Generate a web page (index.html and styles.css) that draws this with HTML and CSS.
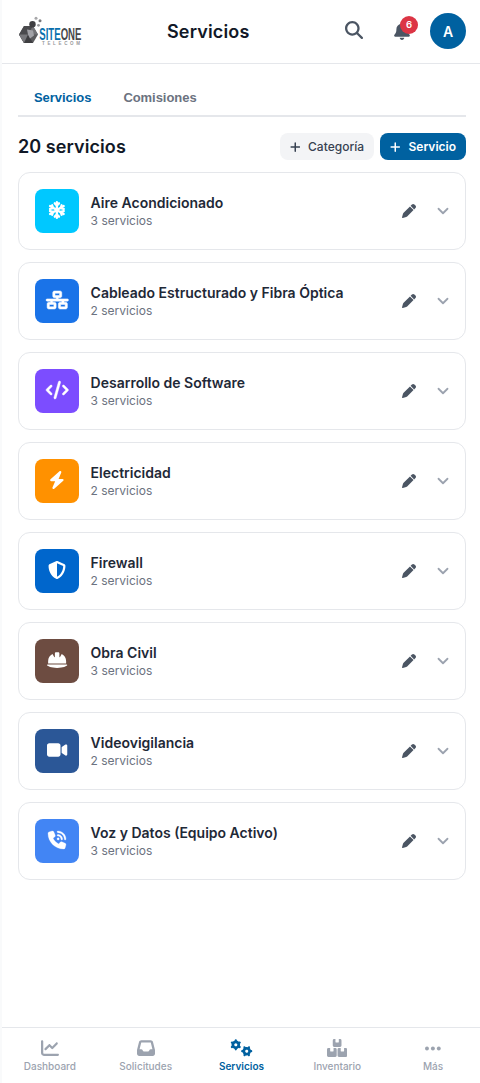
FILE: index.html
```
<!DOCTYPE html>
<html lang="es">
<head>
<meta charset="utf-8">
<title>Servicios</title>
<link rel="stylesheet" href="styles.css">
</head>
<body>
<svg class="sprite" xmlns="http://www.w3.org/2000/svg">
  <symbol id="plus" viewBox="0 0 448 512"><path d="M256 80c0-17.700-14.300-32-32-32s-32 14.300-32 32V224H48c-17.700 0-32 14.300-32 32s14.300 32 32 32H192V432c0 17.700 14.300 32 32 32s32-14.300 32-32V288H400c17.700 0 32-14.300 32-32s-14.300-32-32-32H256V80z"/></symbol>
  <symbol id="pen" viewBox="0 0 512 512"><path d="M362.700 19.300L314.300 67.700 444.300 197.700l48.400-48.400c25-25 25-65.500 0-90.500L453.300 19.300c-25-25-65.500-25-90.500 0zm-71 71L58.600 323.500c-10.400 10.400-18 23.300-22.200 37.400L1 481.200C-1.500 489.700 .8 498.800 7 505s15.300 8.500 23.700 6.100l120.300-35.400c14.100-4.200 27-11.800 37.400-22.200L421.700 220.300 291.700 90.300z"/></symbol>
  <symbol id="chevron" viewBox="0 0 512 512"><path d="M64 160l192 192 192-192" fill="none" stroke="currentColor" stroke-width="76" stroke-linecap="round" stroke-linejoin="round"/></symbol>
</svg>
<div class="app">
  <header class="topbar">
    <svg class="logo" viewBox="0 0 66 32" role="img" aria-label="SiteOne Telecom">
      <path d="M5 11h9l5 8.500-5 8.500H5L0 19.500z" fill="#5b5b5e"/>
      <path d="M5 11h9l-5 8.500H0z" fill="#4a4a4d"/><path d="M14 11l5 8.500H9z" fill="#737377"/><path d="M0 19.500h9L14 28H5z" fill="#3e3e41"/><path d="M0 19.500h9L5 28z" fill="#77777b"/><path d="M9 19.500l-1-5 6 1 1 5-4 3z" fill="#a2a2a7"/>
      <circle cx="13.500" cy="9.300" r="3.200" fill="#3f3f42"/><circle cx="17" cy="3.200" r="1.500" fill="#a7a7aa"/><circle cx="21" cy="5.800" r="1.500" fill="#77777a"/><circle cx="19.500" cy="10.300" r="1.400" fill="#98989b"/>
      <text transform="translate(20.300 25.300) scale(.6 1)" class="logo-name"><tspan fill="#0870ae">SITE</tspan><tspan fill="#48484b">ONE</tspan></text>
      <text x="23" y="30" class="logo-sub" textLength="38">TELECOM</text>
    </svg>
    <h1 class="title">Servicios</h1>
    <div class="actions">
      <svg class="icon-search" viewBox="0 0 512 512"><path d="M416 208c0 45.900-14.900 88.300-40 122.700L502.600 457.400c12.500 12.500 12.500 32.800 0 45.300s-32.800 12.500-45.300 0L330.700 376c-34.400 25.200-76.800 40-122.700 40C93.100 416 0 322.900 0 208S93.100 0 208 0S416 93.100 416 208zM208 352a144 144 0 1 0 0-288 144 144 0 1 0 0 288z"/></svg>
      <div class="bell">
        <svg class="icon-bell" viewBox="0 0 448 512"><path d="M224 0c-17.700 0-32 14.300-32 32V51.200C119 66 64 130.600 64 208v18.800c0 47-17.300 92.400-48.500 127.600l-7.400 8.300c-8.400 9.400-10.400 22.900-5.300 34.400S19.400 416 32 416H416c12.600 0 24-7.400 29.200-18.900s3.100-25-5.300-34.400l-7.400-8.300C401.300 319.200 384 273.900 384 226.800V208c0-77.400-55-142-128-156.800V32c0-17.700-14.300-32-32-32zm45.300 493.300c12-12 18.700-28.300 18.700-45.300H160c0 17 6.700 33.300 18.700 45.300s28.300 18.700 45.300 18.700s33.300-6.700 45.300-18.700z"/></svg>
        <span class="badge">6</span>
      </div>
      <div class="avatar">A</div>
    </div>
  </header>

  <main class="content">
    <nav class="tabs"><span class="tab active">Servicios</span><span class="tab">Comisiones</span></nav>
    <div class="summary">
      <h2 class="count">20 servicios</h2>
      <div class="buttons">
        <button class="btn"><svg class="icon-plus"><use href="#plus"/></svg>Categoría</button>
        <button class="btn primary"><svg class="icon-plus"><use href="#plus"/></svg>Servicio</button>
      </div>
    </div>
    <section class="list">
      <article class="card">
        <div class="tile cyan"><svg viewBox="0 0 448 512"><g fill="none" stroke="currentColor" stroke-width="66" stroke-linecap="round" stroke-linejoin="round"><path d="M224 32v448M30 144l388 224M30 368l388-224"/><path d="M164 66l60 60 60-60M164 446l60-60 60 60M29 226l82-22-22-82M419 286l-82 22 22 82M29 286l82 22-22 82M419 226l-82-22 22-82"/></g></svg></div>
        <div class="info"><h3>Aire Acondicionado</h3><p>3 servicios</p></div>
        <svg class="edit"><use href="#pen"/></svg><svg class="chevron"><use href="#chevron"/></svg>
      </article>
      <article class="card">
        <div class="tile blue"><svg viewBox="0 0 640 512"><path fill-rule="evenodd" stroke="currentColor" stroke-width="14" d="M256 64H384v64H256V64zM240 0c-26.500 0-48 21.500-48 48v96c0 26.500 21.500 48 48 48h48v32H32c-17.700 0-32 14.300-32 32s14.300 32 32 32h96v32H80c-26.500 0-48 21.500-48 48v96c0 26.500 21.500 48 48 48H240c26.500 0 48-21.500 48-48V368c0-26.500-21.500-48-48-48H192V288H448v32H400c-26.500 0-48 21.500-48 48v96c0 26.500 21.500 48 48 48H560c26.500 0 48-21.500 48-48V368c0-26.500-21.500-48-48-48H512V288h96c17.700 0 32-14.300 32-32s-14.300-32-32-32H352V192h48c26.500 0 48-21.500 48-48V48c0-26.500-21.500-48-48-48H240zM96 448V384H224v64H96zm320-64H544v64H416V384z"/></svg></div>
        <div class="info"><h3>Cableado Estructurado y Fibra Óptica</h3><p>2 servicios</p></div>
        <svg class="edit"><use href="#pen"/></svg><svg class="chevron"><use href="#chevron"/></svg>
      </article>
      <article class="card">
        <div class="tile violet"><svg viewBox="0 0 640 512"><path stroke="currentColor" stroke-width="12" d="M392.800 1.200c-17-4.900-34.700 5-39.600 22l-128 448c-4.900 17 5 34.700 22 39.600s34.700-5 39.600-22l128-448c4.900-17-5-34.700-22-39.600zm80.600 120.100c-12.500 12.500-12.500 32.800 0 45.300L562.700 256l-89.400 89.400c-12.500 12.500-12.500 32.800 0 45.300s32.800 12.500 45.300 0l112-112c12.500-12.500 12.500-32.800 0-45.300l-112-112c-12.500-12.500-32.800-12.500-45.300 0zm-306.700 0c-12.500-12.500-32.800-12.500-45.300 0l-112 112c-12.500 12.500-12.500 32.800 0 45.300l112 112c12.500 12.500 32.800 12.500 45.300 0s12.500-32.800 0-45.300L77.300 256l89.400-89.400c12.500-12.500 12.500-32.800 0-45.300z"/></svg></div>
        <div class="info"><h3>Desarrollo de Software</h3><p>3 servicios</p></div>
        <svg class="edit"><use href="#pen"/></svg><svg class="chevron"><use href="#chevron"/></svg>
      </article>
      <article class="card">
        <div class="tile orange"><svg viewBox="0 0 448 512"><path d="M349.400 44.600c5.900-13.700 1.500-29.700-10.600-38.500s-28.600-8-39.900 1.800l-256 224c-10 8.800-13.600 22.900-8.900 35.300S50.700 288 64 288H175.500L98.600 467.400c-5.900 13.700-1.500 29.700 10.600 38.500s28.600 8 39.900-1.800l256-224c10-8.800 13.600-22.900 8.900-35.300s-16.600-20.700-30-20.700H272.500L349.400 44.600z"/></svg></div>
        <div class="info"><h3>Electricidad</h3><p>2 servicios</p></div>
        <svg class="edit"><use href="#pen"/></svg><svg class="chevron"><use href="#chevron"/></svg>
      </article>
      <article class="card">
        <div class="tile azure"><svg viewBox="0 0 512 512"><path fill-rule="evenodd" d="M256 0c4.600 0 9.200 1 13.400 2.900L457.700 82.800c22 9.300 38.400 31 38.300 57.200c-.5 99.200-41.300 280.700-213.600 363.200c-16.700 8-36.100 8-52.800 0C57.300 420.700 16.500 239.200 16 140c-.1-26.200 16.300-47.900 38.300-57.200L242.700 2.900C246.800 1 251.400 0 256 0zm0 66.800V444.800C394 378 431.100 230.100 432 141.400L256 66.800z"/></svg></div>
        <div class="info"><h3>Firewall</h3><p>2 servicios</p></div>
        <svg class="edit"><use href="#pen"/></svg><svg class="chevron"><use href="#chevron"/></svg>
      </article>
      <article class="card">
        <div class="tile brown"><svg viewBox="0 0 576 512"><path d="M256 32c-17.700 0-32 14.300-32 32v2.300 99.600c0 5.600-4.500 10.100-10.100 10.100c-3.600 0-7-1.900-8.800-5.100L157.100 87C83 123.500 32 199.800 32 288v64H544l0-66.400c-.9-87.200-51.700-162.400-125.100-198.600l-48 83.900c-1.800 3.200-5.200 5.100-8.800 5.100c-5.600 0-10.100-4.500-10.100-10.100V66.300 64c0-17.700-14.300-32-32-32H256zM16.600 384C7.400 384 0 391.400 0 400.600c0 4.700 2 9.200 5.800 11.900C27.500 428.400 111.800 480 288 480s260.500-51.600 282.200-67.500c3.800-2.800 5.800-7.200 5.800-11.900c0-9.200-7.400-16.600-16.600-16.600H16.600z"/></svg></div>
        <div class="info"><h3>Obra Civil</h3><p>3 servicios</p></div>
        <svg class="edit"><use href="#pen"/></svg><svg class="chevron"><use href="#chevron"/></svg>
      </article>
      <article class="card">
        <div class="tile navy"><svg viewBox="0 0 576 512"><path d="M0 128C0 92.700 28.700 64 64 64H320c35.300 0 64 28.700 64 64V384c0 35.300-28.700 64-64 64H64c-35.300 0-64-28.700-64-64V128zM559.100 99.800c10.400 5.600 16.900 16.400 16.900 28.200V384c0 11.800-6.500 22.600-16.900 28.200s-23 5-32.900-1.600l-96-64L416 337.100V320 192 174.900l14.200-9.500 96-64c9.800-6.500 22.400-7.200 32.900-1.600z"/></svg></div>
        <div class="info"><h3>Videovigilancia</h3><p>2 servicios</p></div>
        <svg class="edit"><use href="#pen"/></svg><svg class="chevron"><use href="#chevron"/></svg>
      </article>
      <article class="card">
        <div class="tile sky"><svg viewBox="0 0 512 512"><path d="M280 0C408.100 0 512 103.900 512 232c0 13.300-10.700 24-24 24s-24-10.700-24-24c0-101.600-82.400-184-184-184c-13.300 0-24-10.700-24-24s10.700-24 24-24zm8 192a32 32 0 1 1 0 64 32 32 0 1 1 0-64zm-32-72c0-13.300 10.700-24 24-24c75.100 0 136 60.900 136 136c0 13.300-10.700 24-24 24s-24-10.700-24-24c0-48.600-39.400-88-88-88c-13.300 0-24-10.700-24-24zM117.500 1.400c19.400-5.300 39.700 4.600 47.400 23.200l40 96c6.800 16.300 2.100 35.200-11.600 46.300L144 207.300c33.300 70.400 90.300 127.400 160.700 160.700L345 318.700c11.200-13.700 30-18.400 46.300-11.600l96 40c18.600 7.700 28.500 28 23.200 47.400l-24 88C481.800 499.900 466 512 448 512C200.600 512 0 311.400 0 64C0 46 12.100 30.200 29.500 25.400l88-24z" stroke="currentColor" stroke-width="8"/></svg></div>
        <div class="info"><h3>Voz y Datos (Equipo Activo)</h3><p>3 servicios</p></div>
        <svg class="edit"><use href="#pen"/></svg><svg class="chevron"><use href="#chevron"/></svg>
      </article>
    </section>
  </main>

  <nav class="bottom">
    <a class="item"><svg viewBox="0 0 512 512"><path d="M64 64c0-17.700-14.300-32-32-32S0 46.300 0 64V400c0 44.200 35.800 80 80 80H480c17.700 0 32-14.300 32-32s-14.300-32-32-32H80c-8.800 0-16-7.200-16-16V64zm406.600 86.600c12.500-12.500 12.500-32.800 0-45.300s-32.800-12.500-45.300 0L320 210.700l-57.400-57.400c-12.500-12.500-32.800-12.500-45.300 0l-112 112c-12.500 12.500-12.500 32.800 0 45.300s32.800 12.500 45.300 0L240 221.300l57.400 57.400c12.500 12.500 32.800 12.500 45.300 0l128-128z"/></svg>Dashboard</a>
    <a class="item"><svg viewBox="0 0 512 512"><path fill-rule="evenodd" d="M121 32C91.600 32 66 52 58.900 80.500L1.900 308.400C.6 313.500 0 318.700 0 323.900V416c0 35.300 28.700 64 64 64H448c35.300 0 64-28.700 64-64V323.900c0-5.200-.6-10.400-1.900-15.500l-57-227.900C446 52 420.400 32 391 32H121zm0 64H391l48 192H387.800c-12.100 0-23.200 6.800-28.600 17.700l-14.300 28.600c-5.400 10.800-16.500 17.700-28.600 17.700H195.800c-12.100 0-23.200-6.800-28.600-17.700l-14.300-28.600c-5.400-10.800-16.500-17.700-28.600-17.700H73L121 96z"/></svg>Solicitudes</a>
    <a class="item active"><svg viewBox="0 0 640 512">
      <defs><g id="gear" fill="none" stroke="currentColor"><circle r="83" stroke-width="78"/><path stroke-width="62" stroke-linejoin="round" d="M0-98V-128M0 98V128M85-49L111-64M-85 49L-111 64M85 49L111 64M-85-49L-111-64" stroke-linecap="round"/></g></defs>
      <use href="#gear" transform="translate(165 165)"/><use href="#gear" transform="translate(475 347) rotate(30)"/></svg>Servicios</a>
    <a class="item"><svg viewBox="0 0 576 512"><path fill-rule="evenodd" d="M204 0h36v88q0 12 12 12h72q12 0 12-12V0h36q40 0 40 40v144q0 40-40 40H204q-40 0-40-40V40q0-40 40-40zM40 256h50v88q0 12 12 12h72q12 0 12-12v-88h50q40 0 40 40v176q0 40-40 40H40q-40 0-40-40V296q0-40 40-40zm300 0h50v88q0 12 12 12h72q12 0 12-12v-88h50q40 0 40 40v176q0 40-40 40H340q-40 0-40-40V296q0-40 40-40z"/></svg>Inventario</a>
    <a class="item"><svg viewBox="0 0 448 512"><circle cx="56" cy="272" r="56"/><circle cx="224" cy="272" r="56"/><circle cx="392" cy="272" r="56"/></svg>Más</a>
  </nav>
</div>
</body>
</html>
```
FILE: styles.css
```
* { box-sizing: border-box; }
body { margin: 0; padding-left: 2px; background: #f9fafb; font-family: Inter, "Liberation Sans", sans-serif; color: #111827; }
h1, h2, h3, p { margin: 0; }
svg { display: block; fill: currentColor; flex: none; }
.sprite { position: absolute; width: 0; height: 0; }
.app { height: 1083px; display: flex; flex-direction: column; background: #fff; }

.topbar { height: 64px; display: grid; grid-template-columns: 148px 120px 1fr; align-items: center; padding: 0 14px 1px 17px; border-bottom: 1px solid #e5e7eb; }
.logo { width: 66px; height: 32px; overflow: visible; }
.logo-name { font: bold 16px "Liberation Sans", sans-serif; }
.logo-sub { font: bold 4.5px "Liberation Sans", sans-serif; fill: #99999c; }
.title { font-size: 18px; font-weight: 600; line-height: 24px; letter-spacing: .15px; padding-top: 1px; }
.actions { display: flex; align-items: center; justify-content: flex-end; color: #4b5563; }
.icon-search { width: 18px; height: 18px; margin: 0 31px 2px 0; }
.bell { position: relative; margin: 0 20px 1px 0; }
.icon-bell { width: 16px; height: 18px; }
.badge { position: absolute; left: 6px; top: -6px; width: 18px; height: 18px; border-radius: 50%; background: #dc3545; color: #fff; font-size: 9.6px; font-weight: 600; line-height: 18px; text-align: center; }
.avatar { width: 36px; height: 36px; border-radius: 50%; background: #0061a0; color: #fff; font-size: 14px; font-weight: 600; line-height: 37px; text-align: center; }

.content { flex: 1; padding: 16px 14px 0 16px; }
.tabs { height: 37px; display: flex; border-bottom: 2px solid #e5e7eb; font-family: "Liberation Sans", sans-serif; font-size: 13px; font-weight: 600; line-height: 35px; letter-spacing: -.05px; color: #6b7280; }
.tab { padding: 0 16px; }
.tab.active { color: #0061a0; }
.summary { display: flex; align-items: center; justify-content: space-between; margin: 16px 0 12px; height: 27px; }
.count { font-size: 18px; font-weight: 600; line-height: 27px; letter-spacing: .08px; }
.buttons { display: flex; gap: 6px; }
.btn { height: 27px; display: flex; align-items: center; gap: 8px; padding: 0 10px; border: 0; border-radius: 8px; background: #f3f4f6; color: #374151; font: 500 12px Inter, sans-serif; }
.btn.primary { background: #0061a0; color: #fff; font-weight: 600; }
.icon-plus { width: 10.5px; height: 12px; }

.list { display: flex; flex-direction: column; gap: 12px; }
.card { height: 78px; display: flex; align-items: center; padding: 0 16px; border: 1px solid #e5e7eb; border-radius: 12px; }
.tile { width: 44px; height: 44px; border-radius: 8px; display: flex; align-items: center; justify-content: center; color: #fff; margin-right: 11.6px; padding: 0 .5px 1.5px 0; }
.tile svg { height: 18px; overflow: visible; }
.cyan { background: #00c8ff; }
.blue { background: #1a73e8; }
.violet { background: #7c4dff; }
.orange { background: #ff9100; }
.azure { background: #0066cc; }
.brown { background: #6d4c41; }
.navy { background: #2b5797; }
.sky { background: #4285f4; }
.info { flex: 1; }
.info h3 { font-size: 14px; font-weight: 600; line-height: 17px; color: #1f2937; }
.info p { font-size: 12px; line-height: 15px; margin-top: 2px; color: #6b7280; }
.edit { width: 14px; height: 14px; margin-right: 21px; color: #4b5563; }
.chevron { width: 12px; height: 12px; color: #9ca3af; }

.bottom { height: 56px; display: flex; margin: 0 -1px 0 0; border-top: 1px solid #e5e7eb; }
.item { flex: 1; display: flex; flex-direction: column; align-items: center; padding-top: 11px; gap: 3px; font-size: 10px; font-weight: 500; line-height: 13px; color: #9ca3af; }
.item svg { height: 18px; }
.item.active { color: #0061a0; font-weight: 600; }
```
